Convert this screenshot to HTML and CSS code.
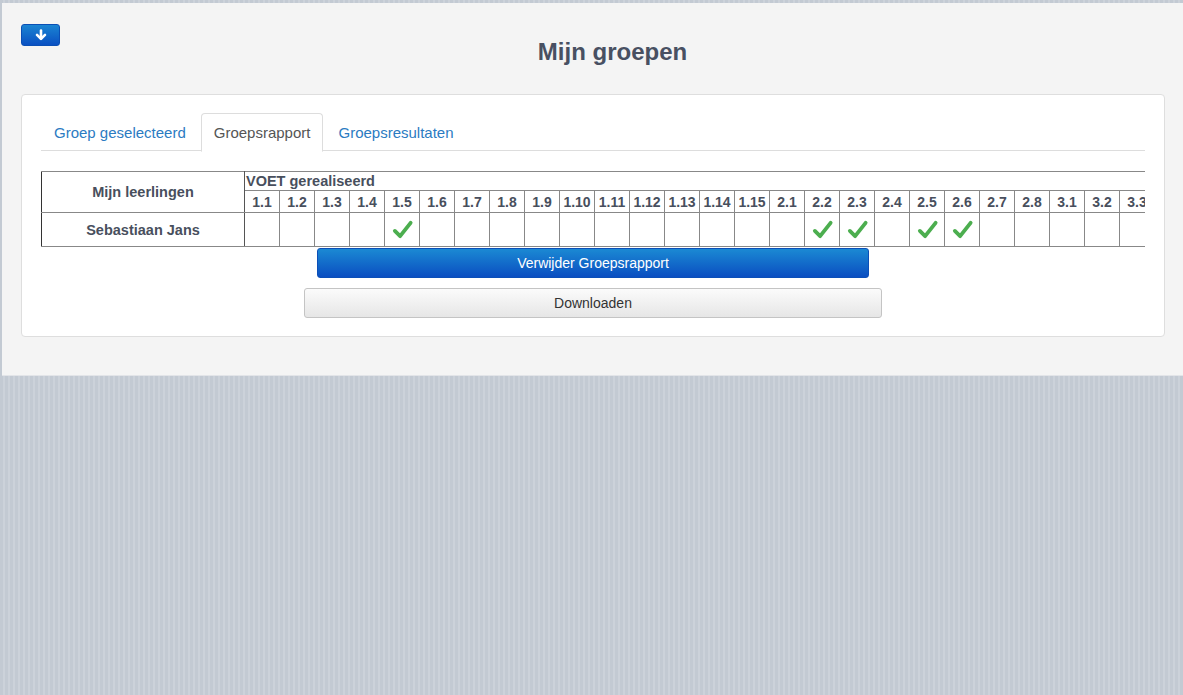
FILE: index.html
```html
<!DOCTYPE html>
<html lang="nl">
<head>
<meta charset="utf-8">
<title>Mijn groepen</title>
<link rel="stylesheet" href="styles.css">
</head>
<body>
<div class="panel">
  <div class="header">
    <button class="btn-icon" type="button" aria-label="Omlaag">
      <svg width="12" height="12" viewBox="0 0 12 12"><path d="M6 1.5V9.5" stroke="#fff" stroke-width="2.6" stroke-linecap="round"/><path d="M2 5.8L6 9.8L10 5.8" stroke="#fff" stroke-width="2.6" fill="none" stroke-linecap="round" stroke-linejoin="round"/></svg>
    </button>
    <h1 class="title">Mijn groepen</h1>
  </div>
  <div class="card">
    <ul class="tabs">
      <li class="tab"><a href="#">Groep geselecteerd</a></li>
      <li class="tab active"><a href="#">Groepsrapport</a></li>
      <li class="tab"><a href="#">Groepsresultaten</a></li>
    </ul>
    <div class="table-wrap">
      <table class="report">
        <colgroup>
          <col class="col-name">
          <col class="col-num"><col class="col-num"><col class="col-num"><col class="col-num"><col class="col-num"><col class="col-num"><col class="col-num"><col class="col-num"><col class="col-num"><col class="col-num"><col class="col-num"><col class="col-num"><col class="col-num"><col class="col-num"><col class="col-num"><col class="col-num"><col class="col-num"><col class="col-num"><col class="col-num"><col class="col-num"><col class="col-num"><col class="col-num"><col class="col-num"><col class="col-num"><col class="col-num"><col class="col-num">
        </colgroup>
        <thead>
          <tr>
            <th class="name-head" rowspan="2">Mijn leerlingen</th>
            <th class="group-head" colspan="26">VOET gerealiseerd</th>
          </tr>
          <tr class="nums">
            <th>1.1</th><th>1.2</th><th>1.3</th><th>1.4</th><th>1.5</th><th>1.6</th><th>1.7</th><th>1.8</th><th>1.9</th><th>1.10</th><th>1.11</th><th>1.12</th><th>1.13</th><th>1.14</th><th>1.15</th><th>2.1</th><th>2.2</th><th>2.3</th><th>2.4</th><th>2.5</th><th>2.6</th><th>2.7</th><th>2.8</th><th>3.1</th><th>3.2</th><th>3.3</th>
          </tr>
        </thead>
        <tbody>
          <tr>
            <td class="name">Sebastiaan Jans</td>
            <td></td><td></td><td></td><td></td>
            <td><svg class="check" viewBox="0 0 24 22"><path d="M4 12.5L9.5 18L20.5 4" stroke="#4cae4f" stroke-width="4" fill="none" stroke-linecap="round" stroke-linejoin="round"/></svg></td>
            <td></td><td></td><td></td><td></td><td></td><td></td><td></td><td></td><td></td><td></td><td></td>
            <td><svg class="check" viewBox="0 0 24 22"><path d="M4 12.5L9.5 18L20.5 4" stroke="#4cae4f" stroke-width="4" fill="none" stroke-linecap="round" stroke-linejoin="round"/></svg></td>
            <td><svg class="check" viewBox="0 0 24 22"><path d="M4 12.5L9.5 18L20.5 4" stroke="#4cae4f" stroke-width="4" fill="none" stroke-linecap="round" stroke-linejoin="round"/></svg></td>
            <td></td>
            <td><svg class="check" viewBox="0 0 24 22"><path d="M4 12.5L9.5 18L20.5 4" stroke="#4cae4f" stroke-width="4" fill="none" stroke-linecap="round" stroke-linejoin="round"/></svg></td>
            <td><svg class="check" viewBox="0 0 24 22"><path d="M4 12.5L9.5 18L20.5 4" stroke="#4cae4f" stroke-width="4" fill="none" stroke-linecap="round" stroke-linejoin="round"/></svg></td>
            <td></td><td></td><td></td><td></td><td></td>
          </tr>
        </tbody>
      </table>
    </div>
    <div class="actions">
      <button class="btn btn-primary" type="button">Verwijder Groepsrapport</button>
      <button class="btn btn-default" type="button">Downloaden</button>
    </div>
  </div>
</div>
</body>
</html>
```
FILE: styles.css
```css
html, body {
  margin: 0;
  padding: 0;
}
body {
  height: 695px;
  overflow: hidden;
  font-family: "Liberation Sans", Arial, sans-serif;
  color: #484f5d;
  background: repeating-linear-gradient(90deg, #c3cad3 0 3px, #ccd2da 3px 5px);
}
.panel {
  margin: 3px 0 0 2px;
  height: 373px;
  box-sizing: border-box;
  background: #f4f4f4;
  border-bottom: 1px solid #e2e4e8;
  padding: 21px 18px 0 19px;
}
.header {
  display: flex;
  align-items: flex-start;
}
.btn-icon {
  width: 39px;
  height: 22px;
  padding: 0;
  border: 1px solid #0a4fb5;
  border-radius: 3px;
  background: linear-gradient(#1a84d2, #0a50c2);
  display: flex;
  align-items: center;
  justify-content: center;
  flex: none;
}
.title {
  flex: 1;
  margin: 14px 0 0;
  text-align: center;
  font-size: 24px;
  line-height: 28px;
  font-weight: bold;
  color: #485062;
}
.card {
  margin-top: 28px;
  background: #fff;
  border: 1px solid #dedede;
  border-radius: 4px;
  padding: 18px 19px 18px 19px;
}
.tabs {
  list-style: none;
  margin: 0;
  padding: 0;
  display: flex;
  border-bottom: 1px solid #dddddd;
  height: 37px;
}
.tab {
  margin-right: 2px;
  margin-bottom: -1px;
}
.tab a {
  display: block;
  padding: 9px 12px 0;
  height: 28px;
  font-size: 15px;
  line-height: 20px;
  color: #2b7bc2;
  text-decoration: none;
  border: 1px solid transparent;
  border-radius: 4px 4px 0 0;
}
.tab.active a {
  color: #555555;
  background: #fff;
  border-color: #dddddd;
  border-bottom-color: #fff;
}
.table-wrap {
  margin-top: 20px;
  width: 1104px;
  overflow: hidden;
}
.report {
  border-collapse: collapse;
  table-layout: fixed;
  width: 1113px;
  border: 1px solid #333;
}
.col-name {
  width: 203px;
}
.col-num {
  width: 35px;
}
.report th, .report td {
  border: 1px solid #888;
  padding: 0;
  color: #484f5d;
}
.name-head {
  font-size: 14.5px;
  font-weight: bold;
  white-space: nowrap;
  border-left-color: #333 !important;
  border-right-color: #555 !important;
}
.group-head {
  text-align: left;
  font-size: 14.5px;
  font-weight: bold;
  height: 18px;
  line-height: 17px;
  padding-left: 1px !important;
  border-bottom: 1px solid #888;
}
.nums th {
  height: 21px;
  font-size: 14px;
  font-weight: bold;
  text-align: center;
  white-space: nowrap;
  overflow: hidden;
}
.report td {
  height: 33px;
  text-align: center;
  vertical-align: middle;
}
.report td.name {
  font-size: 14.5px;
  font-weight: bold;
  white-space: nowrap;
  border-left-color: #333;
  border-right-color: #555;
}
.check {
  display: block;
  width: 23px;
  height: 21px;
  margin: 0 auto;
}
.actions {
  display: flex;
  flex-direction: column;
  align-items: center;
  margin-top: 1px;
}
.btn {
  font-family: "Liberation Sans", Arial, sans-serif;
  font-size: 14px;
  height: 30px;
  border-radius: 3px;
  padding: 0;
}
.btn-primary {
  width: 552px;
  color: #fff;
  border: 1px solid #0b4fb8;
  background: linear-gradient(#1b89d3, #0a4ec1);
}
.btn-default {
  width: 578px;
  margin-top: 10px;
  color: #333;
  border: 1px solid #c4c4c4;
  background: linear-gradient(#fbfbfb, #e6e6e6);
}
```
